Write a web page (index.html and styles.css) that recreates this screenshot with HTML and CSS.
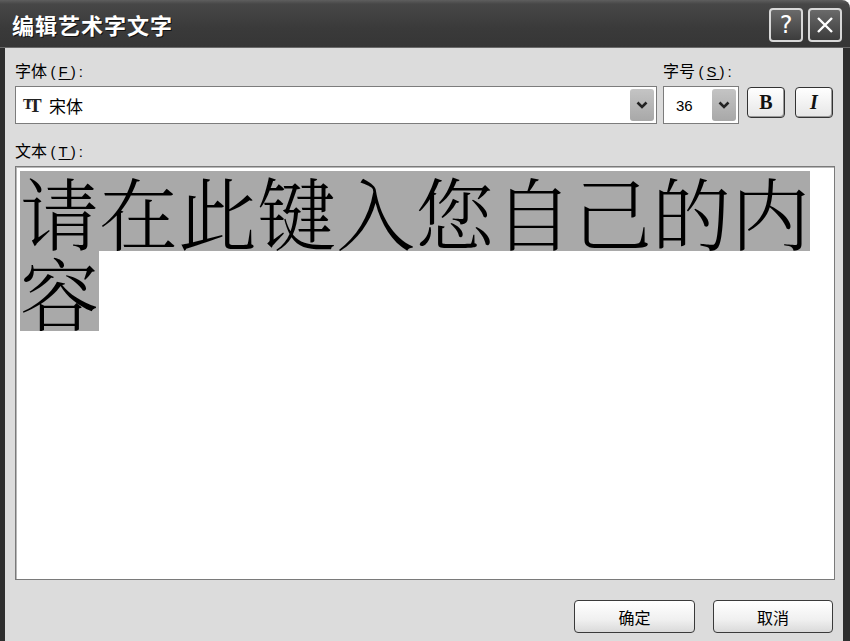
FILE: index.html
```html
<!DOCTYPE html>
<html lang="zh-CN">
<head>
    <meta charset="UTF-8">
    <title>编辑艺术字文字</title>
    <link rel="stylesheet" href="styles.css">
</head>
<body>
    <div class="window">
        <!-- Title bar -->
        <div class="titlebar">
            <span class="title">编辑艺术字文字</span>
            <div class="title-buttons">
                <span class="tb-btn help">?</span>
                <span class="tb-btn close">
                    <svg width="20" height="20" viewBox="0 0 20 20">
                        <path d="M3 3 L17 17 M17 3 L3 17" stroke="#fff" stroke-width="2.4" fill="none"/>
                    </svg>
                </span>
            </div>
        </div>

        <div class="frame">
            <div class="labels">
                <span class="label font-label">字体 <span class="key">(<u>F</u>):</span></span>
                <span class="label">字号 <span class="key">(<u>S</u>):</span></span>
            </div>

            <div class="fields">
                <div class="combo font-combo">
                    <span class="tt-icon"><span class="t1">T</span><span class="t2">T</span></span>
                    <span class="combo-text">宋体</span>
                    <span class="drop-btn">
                        <svg width="12" height="8" viewBox="0 0 12 8">
                            <path d="M1.5 1.5 L6 6 L10.5 1.5" stroke="#222" stroke-width="2.6" fill="none"/>
                        </svg>
                    </span>
                </div>
                <div class="combo size-combo">
                    <span class="combo-text num">36</span>
                    <span class="drop-btn">
                        <svg width="12" height="8" viewBox="0 0 12 8">
                            <path d="M1.5 1.5 L6 6 L10.5 1.5" stroke="#222" stroke-width="2.6" fill="none"/>
                        </svg>
                    </span>
                </div>
                <div class="fmt-btn bold">B</div>
                <div class="fmt-btn italic">I</div>
            </div>

            <div class="label text-label">文本 <span class="key">(<u>T</u>):</span></div>

            <div class="text-area">
                <div class="sel">请在此键入您自己的内</div>
                <div class="sel">容</div>
            </div>

            <div class="footer">
                <div class="btn ok">确定</div>
                <div class="btn">取消</div>
            </div>
        </div>
    </div>
</body>
</html>
```

FILE: styles.css
```css
:root {
    --frame: #2e2e2e;
    --face: #dcdcdc;
    --edge: #7c7c7c;
    --ui-font: "Noto Sans CJK SC", "Liberation Sans", sans-serif;
}

* {
    margin: 0;
    padding: 0;
    box-sizing: border-box;
}

body {
    background: #fff;
    font-family: var(--ui-font);
    color: #111;
}

.window {
    width: 850px;
    height: 641px;
    display: flex;
    flex-direction: column;
}

/* Title bar */
.titlebar {
    height: 48px;
    display: flex;
    justify-content: space-between;
    align-items: center;
    padding: 0 8px 0 12px;
    background: linear-gradient(#5e5e5e 0, #474747 4px, #3a3a3a 60%, #363636 100%);
    border-top-right-radius: 8px;
    border-bottom: 1px solid #6a6a6a;
}

.title {
    color: #fff;
    font-size: 22px;
    font-weight: bold;
    letter-spacing: 1px;
    text-shadow: 1px 1px 0 #111;
}

.title-buttons {
    display: flex;
    gap: 5px;
    margin-top: 3px;
}

.tb-btn {
    width: 34px;
    height: 34px;
    display: flex;
    justify-content: center;
    align-items: center;
    border: 2px solid #d8d8d8;
    border-radius: 4px;
    background: linear-gradient(#6a6a6a, #3c3c3c);
    color: #fff;
    font-family: "DejaVu Sans", sans-serif;
    font-size: 24px;
    line-height: 1;
}

/* Dialog body */
.frame {
    flex: 1;
    display: flex;
    flex-direction: column;
    background: var(--face);
    border-left: 5px solid var(--frame);
    border-right: 7px solid var(--frame);
    padding: 8px 8px 0 10px;
}

.label {
    font-size: 16px;
    line-height: 28px;
    color: #000;
}

.label .key {
    letter-spacing: 3px;
    font-family: "Liberation Sans", sans-serif;
    font-size: 15px;
}

.label u {
    text-underline-offset: 2px;
}

.labels {
    display: flex;
    height: 28px;
    margin-bottom: 2px;
}

.font-label {
    width: 648px;
}

.fields {
    display: flex;
    height: 38px;
}

.combo {
    height: 38px;
    display: flex;
    align-items: center;
    background: #fff;
    border: 1px solid var(--edge);
    padding: 0 2px 0 6px;
}

.font-combo {
    width: 642px;
}

.size-combo {
    width: 76px;
    margin-left: 6px;
    padding-left: 12px;
}

.combo-text {
    flex: 1;
    font-size: 17px;
    color: #000;
}

.combo-text.num {
    font-family: "Liberation Sans", sans-serif;
    font-size: 15px;
}

.tt-icon {
    display: flex;
    align-items: flex-end;
    width: 26px;
    margin-left: 1px;
    font-family: "Liberation Serif", serif;
    font-weight: bold;
    color: #222;
}

.tt-icon .t1 {
    font-size: 15px;
    line-height: 14px;
    margin-bottom: 3px;
}

.tt-icon .t2 {
    font-size: 19px;
    line-height: 16px;
    margin-left: -4px;
}

.drop-btn {
    width: 24px;
    height: 32px;
    display: flex;
    justify-content: center;
    align-items: center;
    border-radius: 3px;
    background: linear-gradient(#c4c4c4, #a8a8a8);
}

.fmt-btn {
    width: 38px;
    height: 31px;
    margin-top: 1px;
    display: flex;
    justify-content: center;
    align-items: center;
    border: 1px solid #333;
    border-radius: 4px;
    background: linear-gradient(#ffffff, #e6e6e6);
    box-shadow: inset -1px -1px 0 #9a9a9a;
    font-family: "Liberation Serif", serif;
    font-weight: bold;
    font-size: 20px;
}

.bold {
    margin-left: 8px;
}

.italic {
    margin-left: 10px;
    font-style: italic;
}

.text-label {
    height: 42px;
    padding-top: 10px;
    line-height: 32px;
}

.text-area {
    width: 820px;
    height: 414px;
    background: #fff;
    border: 1px solid #7a7a7a;
    box-shadow: inset 1px 1px 0 #b8b8b8;
    padding: 4px 0 0 4px;
}

.sel {
    width: fit-content;
    height: 80px;
    background: #a9a9a9;
    color: #000;
    font-family: "Noto Serif CJK SC", "Noto Sans CJK SC", serif;
    font-weight: 300;
    font-size: 79px;
    line-height: 80px;
}

/* Buttons */
.footer {
    flex: 1;
    display: flex;
    justify-content: flex-end;
    align-items: flex-start;
    gap: 18px;
    padding: 20px 2px 0 0;
}

.btn {
    width: 120px;
    height: 33px;
    display: flex;
    justify-content: center;
    align-items: center;
    border: 1px solid #3a3a3a;
    border-radius: 4px;
    background: linear-gradient(#ffffff, #f0f0f0 60%, #dadada);
    font-size: 16px;
    color: #000;
}

.btn.ok {
    width: 121px;
}
```
